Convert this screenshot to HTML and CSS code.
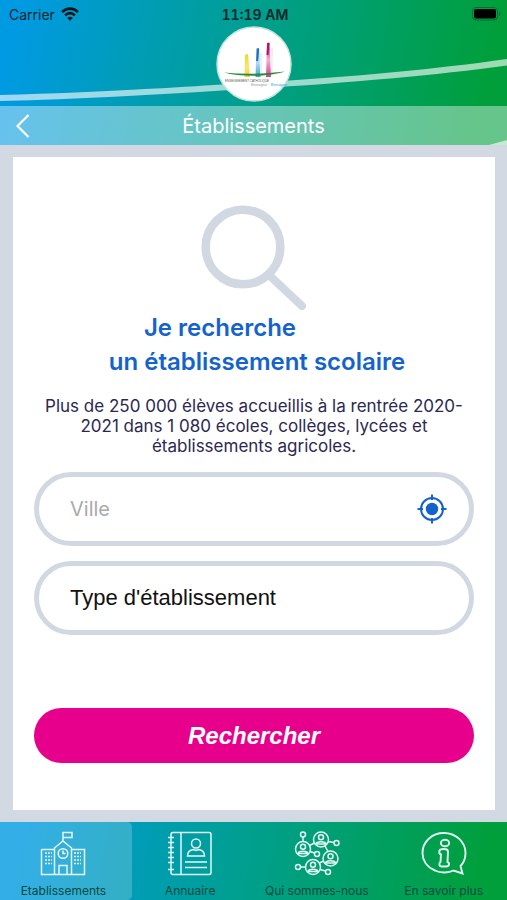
FILE: index.html
```html
<!DOCTYPE html>
<html lang="fr">
<head>
<meta charset="utf-8">
<meta name="viewport" content="width=device-width, initial-scale=1">
<title>Établissements</title>
<link rel="stylesheet" href="styles.css">
</head>
<body>
<div class="app">
  <header class="header">
    <svg class="wave" viewBox="0 0 507 145" preserveAspectRatio="none" aria-hidden="true">
      <path d="M0 95C110 92 180 87 222 84.500C330 79 430 70 507 59V65.500C430 76 330 84.500 222 90.500C150 95 80 99 0 101Z"/>
      <path d="M489 145L507 140V145Z"/>
    </svg>
    <div class="status">
      <div class="carrier">
        <span>Carrier</span>
        <svg width="18" height="14" viewBox="0 0 18 14" aria-hidden="true">
          <g fill="none" stroke="#07171c" stroke-width="2.600">
            <path d="M1 5.200C5.500 .4 12.500 .4 17 5.200"/>
            <path d="M4.100 8.300C6.900 5.400 11.100 5.400 13.900 8.300"/>
          </g>
          <path d="M9 13.800L6.200 10.900C7.800 9.300 10.200 9.300 11.800 10.900Z" fill="#07171c"/>
        </svg>
      </div>
      <time class="clock">11:19 AM</time>
      <svg class="battery" width="29" height="14" viewBox="0 0 29 14" aria-hidden="true">
        <rect x=".5" y=".5" width="25" height="12.500" rx="3.500" fill="none" stroke="#0b6a35"/>
        <rect x="2" y="2" width="22" height="9.500" rx="2" fill="#000"/>
        <path d="M27 4.500C28.800 5.200 28.800 8.300 27 9Z" fill="#0b6a35"/>
      </svg>
    </div>
    <div class="brand">
      <svg class="logo" viewBox="0 0 76 76" role="img" aria-label="Enseignement catholique">
        <defs>
          <linearGradient id="ly" x1="0" y1="0" x2="0" y2="1"><stop offset="0" stop-color="#f9d21c"/><stop offset=".55" stop-color="#fbe477"/><stop offset="1" stop-color="#f7d53a"/></linearGradient>
          <linearGradient id="lb" x1="0" y1="0" x2="0" y2="1"><stop offset="0" stop-color="#1f7fc4"/><stop offset=".5" stop-color="#b5dcf2"/><stop offset="1" stop-color="#35a3dc"/></linearGradient>
          <linearGradient id="lp" x1="0" y1="0" x2="0" y2="1"><stop offset="0" stop-color="#c3177c"/><stop offset=".5" stop-color="#edb3d2"/><stop offset="1" stop-color="#d93a92"/></linearGradient>
        </defs>
        <circle cx="38" cy="38" r="37" fill="#fff" stroke="#bfe3de" stroke-width="1.500"/>
        <path d="M29 29L32 28L34 51H28.500Z" fill="url(#ly)"/>
        <path d="M40.500 22.500L43 22L44.500 51H39.500Z" fill="url(#lb)"/>
        <path d="M43.500 28L46.500 26L46 49H44.500Z" fill="#e4f3fa"/>
        <path d="M51 17L53.500 16.500L55 51H50Z" fill="url(#lp)"/>
        <path d="M54.500 23L57 21L56.500 47H55Z" fill="#fbe6f1"/>
        <path d="M42 23L41 35" stroke="#1e6fb8" stroke-width="1.800"/>
        <path d="M52.300 17L51.500 29" stroke="#b01272" stroke-width="2"/>
        <path d="M8 46.500C28 48.500 48 48 69 45.500C52 51 25 51 8 46.500Z" fill="#258c35"/>
        <text class="logo-main" x="9" y="56">ENSEIGNEMENT CATHOLIQUE</text>
        <text class="logo-sub" x="35" y="60">Bretagne · <tspan fill="#36a5dc">Bretagne</tspan></text>
      </svg>
    </div>
    <div class="titlebar">
      <button class="back" type="button" aria-label="Retour">
        <svg width="14" height="24" viewBox="0 0 14 24" aria-hidden="true"><path d="M12.500 1L1.500 12L12.500 23" fill="none" stroke="#fff" stroke-width="2.200"/></svg>
      </button>
      <h1 class="title">Établissements</h1>
    </div>
  </header>

  <main class="main">
    <section class="card">
      <svg class="magnifier" viewBox="0 0 106 106" aria-hidden="true">
        <circle cx="42" cy="42" r="37.300" fill="none" stroke="#d2d8e2" stroke-width="8.500"/>
        <path d="M68 70L101 101" stroke="#d2d8e2" stroke-width="8" stroke-linecap="round"/>
      </svg>
      <h2 class="heading"><span class="heading-lead">Je recherche</span>un établissement scolaire</h2>
      <p class="intro">Plus de 250 000 élèves accueillis à la rentrée 2020-2021 dans 1 080 écoles, collèges, lycées et établissements agricoles.</p>
      <form class="form">
        <div class="field">
          <input class="city" type="text" placeholder="Ville" aria-label="Ville">
          <button class="locate" type="button" aria-label="Me localiser">
            <svg width="30" height="30" viewBox="0 0 30 30" aria-hidden="true">
              <circle cx="15" cy="15" r="11" fill="none" stroke="#1463cd" stroke-width="2"/>
              <circle cx="15" cy="15" r="6.200" fill="#1463cd"/>
              <path d="M15 .5V6M15 24V29.500M.5 15H6M24 15H29.500" stroke="#1463cd" stroke-width="2"/>
            </svg>
          </button>
        </div>
        <div class="field">
          <select class="kind" aria-label="Type d'établissement"><option>Type d'établissement</option></select>
        </div>
        <button class="submit" type="submit">Rechercher</button>
      </form>
    </section>
  </main>

  <nav class="tabs">
    <a class="tab tab-active" href="#etablissements" aria-current="page">
      <svg class="tab-icon" viewBox="0 0 46 46" aria-hidden="true">
        <path d="M1.500 18.500H14.500M1.500 18.500V43.500H44.500V18.500H31.500M14.500 43.500V17L23 10L31.500 17V43.500M23 10V1.500H32V6.500H23M19 43.500V34.500H27V43.500"/>
        <circle cx="23" cy="22.500" r="4.800"/>
        <path d="M23 19.500V22.500H25.500"/>
        <path stroke-dasharray="2 1" d="M5 22H12M5 25.500H12M5 29H12M5 32.500H12M34 22H41M34 25.500H41M34 29H41M34 32.500H41"/>
      </svg>
      <span>Etablissements</span>
    </a>
    <a class="tab" href="#annuaire">
      <svg class="tab-icon" viewBox="0 0 46 46" aria-hidden="true">
        <rect x="4" y="1.500" width="40" height="42" rx="2"/>
        <path d="M14 1.500V43.500M1 6.500H7M1 11.500H7M1 16.500H7M1 21.500H7M1 26.500H7M1 31.500H7M1 38.500H7"/>
        <circle cx="29" cy="12.500" r="4.500"/>
        <path d="M20.500 25C20.500 20.500 23 19 26.500 18.500L29 19.500L31.500 18.500C35 19 37.500 20.500 37.500 25ZM18 31H40M18 36.500H40"/>
      </svg>
      <span>Annuaire</span>
    </a>
    <a class="tab" href="#qui-sommes-nous">
      <svg class="tab-icon" viewBox="0 0 46 46" aria-hidden="true">
        <circle cx="27" cy="8.500" r="7.500"/><circle cx="27" cy="6.300" r="2.500"/><path d="M22 13C22.500 10 31.500 10 32 13Z"/>
        <circle cx="9" cy="18" r="7.500"/><circle cx="9" cy="15.800" r="2.500"/><path d="M4 22.500C4.500 19.500 13.500 19.500 14 22.500Z"/>
        <circle cx="36.500" cy="27.500" r="7.500"/><circle cx="36.500" cy="25.300" r="2.500"/><path d="M31.500 32C32 29 41 29 41.500 32Z"/>
        <circle cx="19" cy="36" r="7.500"/><circle cx="19" cy="33.800" r="2.500"/><path d="M14 40.500C14.500 37.500 23.500 37.500 24 40.500Z"/>
        <circle cx="9" cy="3.500" r="2.500"/><circle cx="42.500" cy="12" r="2.500"/><circle cx="23" cy="23" r="2.500"/><circle cx="4" cy="36" r="2.500"/><circle cx="34" cy="41" r="2.500"/>
        <path d="M9 6V10.500M34 10.500L40 11.500M15.500 14.500L20.500 12M31 15L34 20.500M16 20.500L20.500 22M6.500 36H11.500M26 38.500L31.500 40M25.500 32L29.500 30"/>
      </svg>
      <span>Qui sommes-nous</span>
    </a>
    <a class="tab" href="#en-savoir-plus">
      <svg class="tab-icon" viewBox="0 0 46 46" aria-hidden="true">
        <path stroke-width="1.900" d="M32.500 39.500C28 41.800 20 42.500 14 39.500C5.500 36 1.500 29 1.500 22C1.500 10.500 11 2 23 2C35 2 44.500 11 44.500 22C44.500 27 43 31.500 39.500 35L41.500 42.500Z"/>
        <ellipse stroke-width="1.900" cx="24" cy="12" rx="4.200" ry="3.300"/>
        <path stroke-width="1.900" d="M18.500 20C18.500 17.500 27 17 27 20.500L26.500 31C29 32 28.500 35.500 25 35.500H21C17.500 35.500 18 32 19.500 31L20 23.500C18.500 23 18 21.500 18.500 20Z"/>
      </svg>
      <span>En savoir plus</span>
    </a>
  </nav>
</div>
</body>
</html>
```
FILE: styles.css
```css
* {
  box-sizing: border-box;
}

body {
  margin: 0;
  font-family: Inter, "Liberation Sans", sans-serif;
}

button {
  border: 0;
  padding: 0;
  background: none;
  cursor: pointer;
}

svg {
  display: block;
}

.app {
  min-height: 100vh;
  display: flex;
  flex-direction: column;
  background: #d3d9e2;
}

.header {
  position: relative;
  background: linear-gradient(100deg, #009ae2 4%, #009f8c 50%, #009f3c 94%);
}

.wave {
  position: absolute;
  inset: 0;
  width: 100%;
  height: 100%;
  fill: rgba(255, 255, 255, 0.62);
}

.status {
  position: relative;
  display: grid;
  grid-template-columns: 1fr auto 1fr;
  align-items: center;
  height: 26px;
  padding: 2px 6px 0 9px;
  font-size: 14px;
  color: #07262c;
}

.carrier {
  display: flex;
  align-items: center;
  gap: 6px;
}

.clock {
  font-weight: 600;
  font-variant-numeric: tabular-nums;
}

.battery {
  justify-self: end;
}

.brand {
  position: relative;
  display: flex;
  justify-content: center;
  height: 80px;
}

.logo {
  width: 76px;
  height: 76px;
}

.logo-main,
.logo-sub {
  font: 3px "Liberation Sans", sans-serif;
  fill: #555;
}

.logo-sub {
  font-size: 4px;
  fill: #999;
}

.titlebar {
  position: relative;
  display: grid;
  grid-template-columns: 30px 1fr 30px;
  align-items: center;
  height: 39px;
  padding: 0 16px;
  background: rgba(255, 255, 255, 0.4);
}

.title {
  margin: 0;
  font-size: 20px;
  font-weight: 400;
  line-height: 24px;
  text-align: center;
  color: #fff;
}

.main {
  flex: 1;
  display: flex;
  padding: 12px 12px 12px 13px;
}

.card {
  flex: 1;
  display: flex;
  flex-direction: column;
  padding: 48px 21px 46px;
  background: #fff;
}

.magnifier {
  align-self: center;
  width: 106px;
  height: 106px;
}

.heading {
  margin: 0;
  padding-left: 6px;
  font-size: 24px;
  font-weight: 600;
  line-height: 34px;
  text-align: center;
  color: #1463cd;
}

.heading-lead {
  display: block;
  padding-right: 74px;
}

.intro {
  margin: 17px 0 16px;
  font-size: 17px;
  line-height: 20px;
  text-align: center;
  color: #2c2850;
}

.form {
  display: flex;
  flex-direction: column;
  gap: 15px;
}

.field {
  display: flex;
  align-items: center;
  height: 74px;
  padding: 0 22px 0 31px;
  border: 5px solid #d2d8e2;
  border-radius: 37px;
}

.city,
.kind {
  flex: 1;
  min-width: 0;
  height: 40px;
  padding: 0;
  border: 0;
  background: none;
  color: #111;
}

.city {
  font: 20px Inter, sans-serif;
}

.city::placeholder {
  color: #aaa;
}

.kind {
  appearance: none;
  padding-bottom: 2px;
  font: 22px "Liberation Sans", sans-serif;
}

.submit {
  height: 55px;
  margin-top: 58px;
  border-radius: 28px;
  background: #e6008c;
  font: italic bold 24px "Liberation Sans", sans-serif;
  color: #fff;
}

.tabs {
  display: grid;
  grid-template-columns: repeat(4, 1fr);
  background: linear-gradient(100deg, #009ae2 4%, #009f8c 50%, #009f3c 94%);
}

.tab {
  position: relative;
  display: flex;
  flex-direction: column;
  align-items: center;
  gap: 6px;
  height: 78px;
  padding-top: 9px;
  font-size: 12px;
  line-height: 15px;
  white-space: nowrap;
  text-decoration: none;
  color: #064a40;
}

.tab-active::before {
  content: "";
  position: absolute;
  inset: 0 -5px 0 0;
  border-radius: 0 5px 5px 0;
  background: rgba(255, 255, 255, 0.2);
}

.tab-icon {
  position: relative;
  width: 46px;
  height: 46px;
  fill: none;
  stroke: #e4f8f4;
  stroke-width: 1.5;
}

.tab span {
  position: relative;
}
```
